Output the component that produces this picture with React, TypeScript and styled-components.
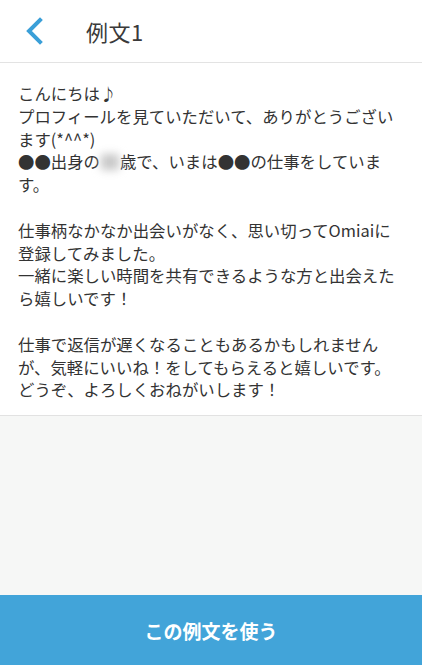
import React from "react";
import styled, { createGlobalStyle } from "styled-components";

const GlobalStyle = createGlobalStyle`
  html, body {
    margin: 0;
    padding: 0;
    background: #f6f7f6;
  }
  body {
    font-family: "Noto Sans CJK JP", "Noto Sans", sans-serif;
  }
`;

const App: React.FC = () => {
  return (
    <Page>
      <GlobalStyle />
      <Header>
        <BackButton aria-label="back">
          <svg width="20" height="28" viewBox="0 0 20 28">
            <path
              d="M16 3 L5 14 L16 25"
              fill="none"
              stroke="#3a9fd8"
              strokeWidth="4"
              strokeLinecap="square"
            />
          </svg>
        </BackButton>
        <Title>例文1</Title>
      </Header>
      <Card>
        <Paragraph>
          こんにちは♪
          <br />
          プロフィールを見ていただいて、ありがとうございます(*^^*)
          <br />
          ●●出身の<Blurred />歳で、いまは●●の仕事をしています。
        </Paragraph>
        <Paragraph>
          仕事柄なかなか出会いがなく、思い切ってOmiaiに登録してみました。
          <br />
          一緒に楽しい時間を共有できるような方と出会えたら嬉しいです！
        </Paragraph>
        <Paragraph>
          仕事で返信が遅くなることもあるかもしれませんが、気軽にいいね！をしてもらえると嬉しいです。
          <br />
          どうぞ、よろしくおねがいします！
        </Paragraph>
      </Card>
      <Spacer />
      <UseButton>この例文を使う</UseButton>
    </Page>
  );
};

export default App;

const Page = styled.div`
  display: flex;
  flex-direction: column;
  height: 665px;
  background: #f6f7f6;
`;

const Header = styled.div`
  display: flex;
  align-items: center;
  height: 63px;
  padding-left: 22px;
  background: #fff;
  border-bottom: 1px solid #e3e3e3;
  box-sizing: border-box;
`;

const BackButton = styled.button`
  display: flex;
  align-items: center;
  justify-content: center;
  width: 24px;
  height: 40px;
  padding: 0;
  border: none;
  background: none;
  cursor: pointer;
`;

const Title = styled.h1`
  margin: 0 0 0 40px;
  font-size: 22px;
  font-weight: 400;
  color: #3a3a3a;
  letter-spacing: 0.5px;
`;

const Card = styled.div`
  background: #fff;
  padding: 19px 18px 14px 18px;
  border-bottom: 1px solid #e2e2e2;
`;

const Paragraph = styled.p`
  margin: 0 0 22.8px 0;
  font-size: 16.4px;
  line-height: 22.8px;
  color: #333;
  word-break: break-all;

  &:last-child {
    margin-bottom: 0;
  }
`;

const Blurred = styled.span`
  display: inline-block;
  width: 18px;
  height: 16px;
  margin: 0 1px;
  vertical-align: -2px;
  background: #c8c8c8;
  filter: blur(4px);
`;

const Spacer = styled.div`
  flex: 1;
`;

const UseButton = styled.button`
  height: 70px;
  border: none;
  background: #42a4d9;
  color: #fff;
  font-family: "Noto Sans CJK JP", sans-serif;
  font-size: 19px;
  font-weight: 700;
  cursor: pointer;
`;
